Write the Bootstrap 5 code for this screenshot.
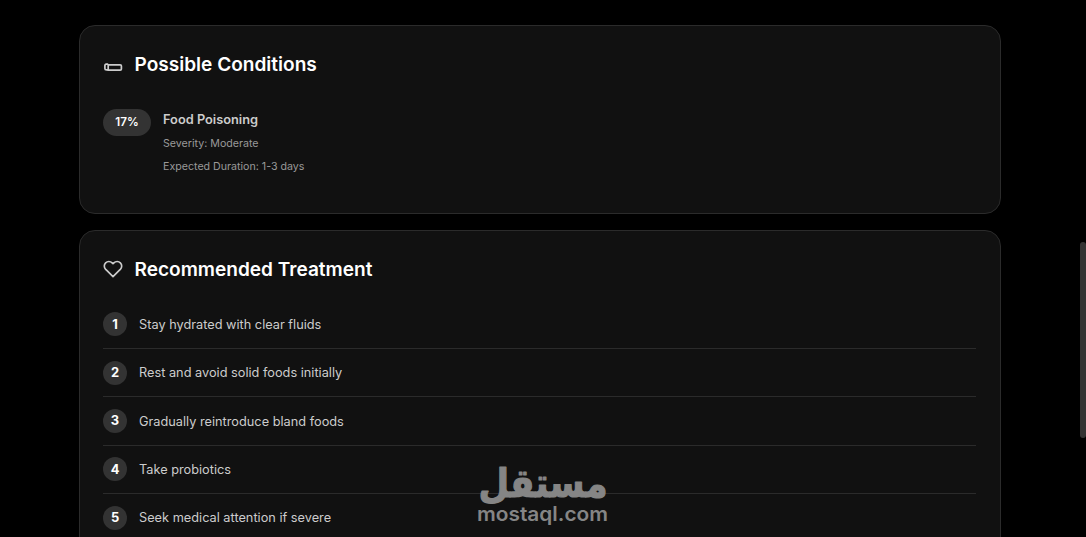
<!DOCTYPE html>
<html lang="en">
<head>
    <meta charset="UTF-8">
    <meta name="viewport" content="width=device-width, initial-scale=1.0">
    <title>Diagnosis Results</title>
    <link rel="stylesheet" href="https://cdn.jsdelivr.net/npm/bootstrap@5.3.0/dist/css/bootstrap.min.css">
    <script src="https://cdn.jsdelivr.net/npm/bootstrap@5.3.0/dist/js/bootstrap.bundle.min.js"></script>

    <style>
        body {
            background-color: #000;
            color: #ccc;
            font-family: Inter, sans-serif;
            height: 100vh;
            overflow: hidden;
        }

        .results {
            width: 922px;
            height: 100vh;
            margin-left: 79px;
            padding-top: 25px;
            overflow: hidden;
        }

        .result-card {
            flex-shrink: 0;
            background-color: #111;
            border: 1px solid #2b2b2b;
            border-radius: 16px;
            padding: 24px 24px 24px 23px;
            color: #ccc;
        }

        .conditions {
            height: 188.6px;
        }

        .card-heading {
            color: #fff;
            font-size: 19.07px;
            font-weight: 600;
            line-height: 29px;
            gap: 11.5px;
        }

        .percent {
            width: 48px;
            height: 27px;
            margin-top: 1px;
            font-size: 11.7px;
            font-weight: 600;
            background-color: #333;
            color: #fff;
        }

        .condition-list {
            margin-top: 29px;
        }

        .condition-name {
            font-size: 12.8px;
            font-weight: 600;
            line-height: 24px;
        }

        .condition-info {
            font-size: 10.65px;
            line-height: 23px;
            color: #999;
        }

        .step-list {
            margin-top: 17px;
        }

        .step {
            height: 48.4px;
            font-size: 12.76px;
            border-bottom: 1px solid #2b2b2b;
        }

        .step-number {
            width: 24px;
            height: 24px;
            font-weight: 700;
            font-size: 12.9px;
            background-color: #333;
            color: #fff;
        }

        .scroll-thumb {
            position: absolute;
            right: 0;
            top: 242px;
            width: 6px;
            height: 196px;
            border-radius: 3px;
            background-color: #333;
        }

        .watermark {
            position: absolute;
            left: 470px;
            top: 455px;
        }
    </style>
</head>
<body>
    <main class="results d-flex flex-column gap-3">
        <!-- Possible conditions -->
        <section class="result-card conditions">
            <h2 class="card-heading d-flex align-items-center mb-0">
                <svg width="20" height="20" viewBox="0 0 20 20" fill="none" stroke="#ccc" stroke-width="1.7" stroke-linejoin="round">
                    <path d="M5.2 9.8H17.2Q18.4 9.8 18.4 11V14Q18.4 15.2 17.2 15.2H5.2Z"/>
                    <path d="M5.2 9.2H3.2Q1.9 9.2 1.9 10.5V13.4Q1.9 14.8 3.4 14.8H5.2"/>
                </svg>
                <span>Possible Conditions</span>
            </h2>
            <div class="condition-list d-flex align-items-start">
                <span class="percent rounded-pill d-flex align-items-center justify-content-center">17%</span>
                <div class="ms-2 ps-1">
                    <div class="condition-name">Food Poisoning</div>
                    <div class="condition-info">Severity: Moderate</div>
                    <div class="condition-info">Expected Duration: 1-3 days</div>
                </div>
            </div>
        </section>

        <!-- Recommended treatment -->
        <section class="result-card">
            <h2 class="card-heading d-flex align-items-center mb-0">
                <svg width="20" height="20" viewBox="0 0 24 24" fill="none" stroke="#ccc" stroke-width="2" stroke-linecap="round" stroke-linejoin="round">
                    <path d="M20.84 4.61a5.5 5.5 0 0 0-7.78 0L12 5.67l-1.06-1.06a5.5 5.5 0 0 0-7.78 7.78l1.06 1.06L12 21.23l7.78-7.78 1.06-1.06a5.5 5.5 0 0 0 0-7.78z"/>
                </svg>
                <span>Recommended Treatment</span>
            </h2>
            <div class="step-list">
                <div class="step d-flex align-items-center gap-2">
                    <span class="step-number rounded-circle d-flex align-items-center justify-content-center">1</span>
                    <span class="ms-1">Stay hydrated with clear fluids</span>
                </div>
                <div class="step d-flex align-items-center gap-2">
                    <span class="step-number rounded-circle d-flex align-items-center justify-content-center">2</span>
                    <span class="ms-1">Rest and avoid solid foods initially</span>
                </div>
                <div class="step d-flex align-items-center gap-2">
                    <span class="step-number rounded-circle d-flex align-items-center justify-content-center">3</span>
                    <span class="ms-1">Gradually reintroduce bland foods</span>
                </div>
                <div class="step d-flex align-items-center gap-2">
                    <span class="step-number rounded-circle d-flex align-items-center justify-content-center">4</span>
                    <span class="ms-1">Take probiotics</span>
                </div>
                <div class="step d-flex align-items-center gap-2">
                    <span class="step-number rounded-circle d-flex align-items-center justify-content-center">5</span>
                    <span class="ms-1">Seek medical attention if severe</span>
                </div>
            </div>
        </section>
    </main>

    <div class="scroll-thumb"></div>

    <!-- Watermark -->
    <svg class="watermark" width="146" height="80" fill="#858585" overflow="visible">
        <text x="73" y="42" text-anchor="middle" direction="rtl" font-family="DejaVu Sans, sans-serif" font-weight="700" font-size="40" textLength="129" lengthAdjust="spacingAndGlyphs" stroke="#858585" stroke-width="1.2" stroke-linejoin="round">مستقل</text>
        <text x="7" y="66" font-family="Inter, sans-serif" font-weight="600" font-size="20" textLength="131" lengthAdjust="spacingAndGlyphs">mostaql.com</text>
    </svg>
</body>
</html>
